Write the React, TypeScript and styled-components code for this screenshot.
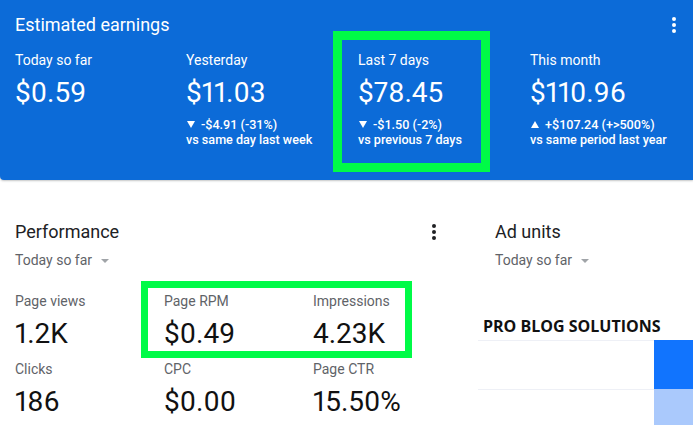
import React from 'react';
import styled, { createGlobalStyle } from 'styled-components';

const GlobalStyle = createGlobalStyle`
  html, body {
    margin: 0;
    padding: 0;
    background: #ffffff;
    overflow: hidden;
  }
  body {
    font-family: Roboto, "Liberation Sans", Arial, sans-serif;
    color: #202124;
  }
`;

const colors = {
  blue: '#0c6bd8',
  highlight: '#00fb47',
  ink: '#202124',
  muted: '#5f6368',
  caret: '#a0a4a8',
  rule: '#eef0f6',
};

type Earning = {
  label: string;
  value: string;
  delta?: string;
  up?: boolean;
  compare?: string;
  highlight?: boolean;
};

const earnings: Earning[] = [
  { label: 'Today so far', value: '$0.59' },
  {
    label: 'Yesterday',
    value: '$11.03',
    delta: '-$4.91 (-31%)',
    compare: 'vs same day last week',
  },
  {
    label: 'Last 7 days',
    value: '$78.45',
    delta: '-$1.50 (-2%)',
    compare: 'vs previous 7 days',
    highlight: true,
  },
  {
    label: 'This month',
    value: '$110.96',
    delta: '+$107.24 (+>500%)',
    up: true,
    compare: 'vs same period last year',
  },
];

type Metric = { label: string; value: string; highlight?: boolean };

const metrics: Metric[] = [
  { label: 'Page views', value: '1.2K' },
  { label: 'Page RPM', value: '$0.49', highlight: true },
  { label: 'Impressions', value: '4.23K' },
  { label: 'Clicks', value: '186' },
  { label: 'CPC', value: '$0.00' },
  { label: 'Page CTR', value: '15.50%' },
];

const MoreIcon = ({ color }: { color: string }) => (
  <svg width="24" height="24" viewBox="0 0 24 24" fill={color}>
    <circle cx="12" cy="6" r="2" />
    <circle cx="12" cy="12" r="2" />
    <circle cx="12" cy="18" r="2" />
  </svg>
);

const App = () => {
  return (
    <Page>
      <GlobalStyle />
      <EarningsCard>
        <CardHeader>
          <CardTitle>Estimated earnings</CardTitle>
          <MenuButton $offset={-1}>
            <MoreIcon color="#ffffff" />
          </MenuButton>
        </CardHeader>
        <StatsRow>
          {earnings.map((e) => (
            <Stat key={e.label} $highlight={!!e.highlight}>
              <StatLabel>{e.label}</StatLabel>
              <StatValue>{e.value}</StatValue>
              {e.delta && (
                <Delta>
                  <Arrow $up={!!e.up} />
                  {e.delta}
                </Delta>
              )}
              {e.compare && <Compare>{e.compare}</Compare>}
            </Stat>
          ))}
        </StatsRow>
      </EarningsCard>

      <Lower>
        <Performance>
          <PanelHeader>
            <PanelTitle>Performance</PanelTitle>
            <MenuButton $offset={0}>
              <MoreIcon color={colors.ink} />
            </MenuButton>
          </PanelHeader>
          <RangePicker>
            Today so far
            <Caret />
          </RangePicker>
          <MetricGrid>
            {metrics.map((m) => (
              <MetricCell key={m.label} $highlight={!!m.highlight}>
                <MetricLabel>{m.label}</MetricLabel>
                <MetricValue>{m.value}</MetricValue>
              </MetricCell>
            ))}
          </MetricGrid>
        </Performance>

        <AdUnits>
          <AdHeader>
            <PanelTitle>Ad units</PanelTitle>
            <RangePicker>
              Today so far
              <Caret />
            </RangePicker>
          </AdHeader>
          <Brand>PRO BLOG SOLUTIONS</Brand>
          <UnitTable>
            <UnitRow>
              <UnitBar $color="#1174fe" />
            </UnitRow>
            <UnitRow>
              <UnitBar $color="#aac9fc" />
            </UnitRow>
          </UnitTable>
        </AdUnits>
      </Lower>
    </Page>
  );
};

export default App;

const Page = styled.div`
  width: 693px;
  height: 425px;
  overflow: hidden;
`;

const EarningsCard = styled.section`
  box-sizing: border-box;
  height: 180px;
  padding: 13px 7px 0 15px;
  background: ${colors.blue};
  color: #ffffff;
  border-radius: 0 0 0 4px;
  box-shadow: 0 1px 2px rgba(60, 64, 67, 0.3);
`;

const CardHeader = styled.header`
  display: flex;
  justify-content: space-between;
  align-items: center;
`;

const CardTitle = styled.h2`
  margin: 0;
  font-size: 18px;
  line-height: 24px;
  font-weight: 400;
`;

const MenuButton = styled.span<{ $offset: number }>`
  display: flex;
  width: 24px;
  height: 24px;
  margin-top: ${(p) => p.$offset}px;
`;

const StatsRow = styled.div`
  display: grid;
  grid-template-columns: 171px 172px 172px 1fr;
  margin-top: 13px;
`;

const Stat = styled.div<{ $highlight: boolean }>`
  position: relative;
  display: flex;
  flex-direction: column;

  &::before {
    content: '';
    display: ${(p) => (p.$highlight ? 'block' : 'none')};
    position: absolute;
    top: -19px;
    left: -25px;
    width: 157px;
    height: 141px;
    box-sizing: border-box;
    border: 9px solid ${colors.highlight};
    pointer-events: none;
  }
`;

const StatLabel = styled.div`
  font-size: 14px;
  line-height: 20px;
`;

const StatValue = styled.div`
  margin-top: 5px;
  font-size: 28px;
  line-height: 36px;
  font-variant-numeric: proportional-nums;
`;

const Delta = styled.div`
  display: flex;
  align-items: center;
  margin-top: 6px;
  font-size: 12.6px;
  line-height: 15px;
  font-weight: 500;
  white-space: nowrap;
`;

const Arrow = styled.span<{ $up: boolean }>`
  width: 0;
  height: 0;
  margin: 0 6px 0 1px;
  border-left: 4px solid transparent;
  border-right: 4px solid transparent;
  ${(p) =>
    p.$up
      ? 'border-bottom: 7px solid #ffffff;'
      : 'border-top: 7px solid #ffffff;'}
`;

const Compare = styled.div`
  font-size: 12.6px;
  line-height: 15px;
  font-weight: 500;
  white-space: nowrap;
`;

const Lower = styled.div`
  display: flex;
  padding-top: 40px;
`;

const Performance = styled.section`
  box-sizing: border-box;
  width: 478px;
  padding: 0 32px 0 15px;
`;

const PanelHeader = styled.header`
  display: flex;
  justify-content: space-between;
  align-items: center;
`;

const PanelTitle = styled.h3`
  margin: 0;
  font-size: 18px;
  line-height: 24px;
  font-weight: 400;
  color: ${colors.ink};
`;

const RangePicker = styled.div`
  display: flex;
  align-items: center;
  margin-top: 6px;
  font-size: 14px;
  line-height: 20px;
  color: ${colors.muted};
`;

const Caret = styled.span`
  width: 0;
  height: 0;
  margin-left: 9px;
  margin-top: 1px;
  border-left: 4px solid transparent;
  border-right: 4px solid transparent;
  border-top: 4px solid ${colors.caret};
`;

const MetricGrid = styled.div`
  display: grid;
  grid-template-columns: repeat(3, 149px);
  row-gap: 7px;
  margin-top: 21px;
`;

const MetricCell = styled.div<{ $highlight: boolean }>`
  position: relative;
  display: flex;
  flex-direction: column;

  &::before {
    content: '';
    display: ${(p) => (p.$highlight ? 'block' : 'none')};
    position: absolute;
    top: -10px;
    left: -23px;
    width: 271px;
    height: 77px;
    box-sizing: border-box;
    border: 7px solid ${colors.highlight};
    pointer-events: none;
  }
`;

const MetricLabel = styled.div`
  font-size: 14px;
  line-height: 20px;
  color: ${colors.muted};
`;

const MetricValue = styled.div`
  margin-top: 5px;
  font-size: 28px;
  line-height: 36px;
  color: #111111;
  font-variant-numeric: proportional-nums;
`;

const AdUnits = styled.section`
  flex: 1;
  display: flex;
  flex-direction: column;
`;

const AdHeader = styled.header`
  padding-left: 17px;
`;

const Brand = styled.div`
  margin-top: 45px;
  padding-left: 5px;
  font-family: "Open Sans", "Liberation Sans", sans-serif;
  font-size: 16px;
  line-height: 22px;
  font-weight: 700;
  color: #111111;
  white-space: nowrap;
`;

const UnitTable = styled.div`
  margin-top: 3px;
`;

const UnitRow = styled.div`
  display: flex;
  justify-content: flex-end;
  height: 48px;
  border-top: 1px solid ${colors.rule};
`;

const UnitBar = styled.span<{ $color: string }>`
  width: 39px;
  margin-top: -1px;
  height: 49px;
  background: ${(p) => p.$color};
`;
